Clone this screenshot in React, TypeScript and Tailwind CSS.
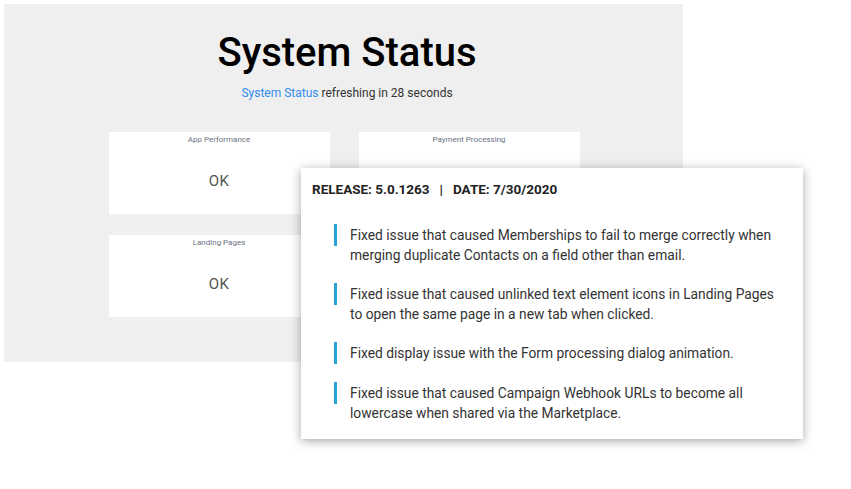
import React from "react";

const items = [
  ["Fixed issue that caused Memberships to fail to merge correctly when", "merging duplicate Contacts on a field other than email."],
  ["Fixed issue that caused unlinked text element icons in Landing Pages", "to open the same page in a new tab when clicked."],
  ["Fixed display issue with the Form processing dialog animation."],
  ["Fixed issue that caused Campaign Webhook URLs to become all", "lowercase when shared via the Marketplace."],
];

function Card({ title }: { title: string }) {
  return (
    <div className="w-[221px] h-[82px] bg-white flex flex-col items-center">
      <span className="text-[8px] text-gray-500 mt-[2px] leading-[12px]">{title}</span>
      <span className="text-[15px] text-[#555] tracking-wide mt-[24px]">OK</span>
    </div>
  );
}

export default function App() {
  return (
    <div className="relative w-[851px] h-[489px] bg-white overflow-hidden" style={{ fontFamily: "Roboto, 'Liberation Sans', sans-serif" }}>
      <div className="ml-[4px] mt-[4px] w-[679px] h-[358px] bg-[#efefef] flex flex-col items-center">
        <h1 className="text-[40px] font-medium text-black leading-none mt-[29px] ml-[7px]">System Status</h1>
        <p className="text-[12px] text-[#333] mt-[11px] ml-[7px]">
          <span className="text-[#2f8cf0]">System Status</span> refreshing in 28 seconds
        </p>
        <div className="grid grid-cols-2 gap-x-[29px] gap-y-[21px] mt-[30px] ml-[1px]">
          <Card title="App Performance" />
          <Card title="Payment Processing" />
          <Card title="Landing Pages" />
          <Card title="" />
        </div>
      </div>
      <div className="absolute left-[301px] top-[168px] w-[502px] h-[271px] bg-white shadow-[0_2px_10px_rgba(0,0,0,0.35)] px-[11px] pt-[11px]">
        <div className="text-[13.5px] font-bold text-[#222] flex gap-[10px]">
          <span>RELEASE: 5.0.1263</span><span>|</span><span>DATE: 7/30/2020</span>
        </div>
        <div className="flex flex-col gap-[19px] mt-[26px] ml-[22px]">
          {items.map((lines, i) => (
            <div key={i} className="flex gap-[13px]">
              <div className="w-[3px] h-[22px] bg-[#29a3d6] mt-[-1px]" />
              <div className="text-[13.8px] leading-[20px] text-[#333]">
                {lines.map((l, j) => <div key={j}>{l}</div>)}
              </div>
            </div>
          ))}
        </div>
      </div>
    </div>
  );
}
